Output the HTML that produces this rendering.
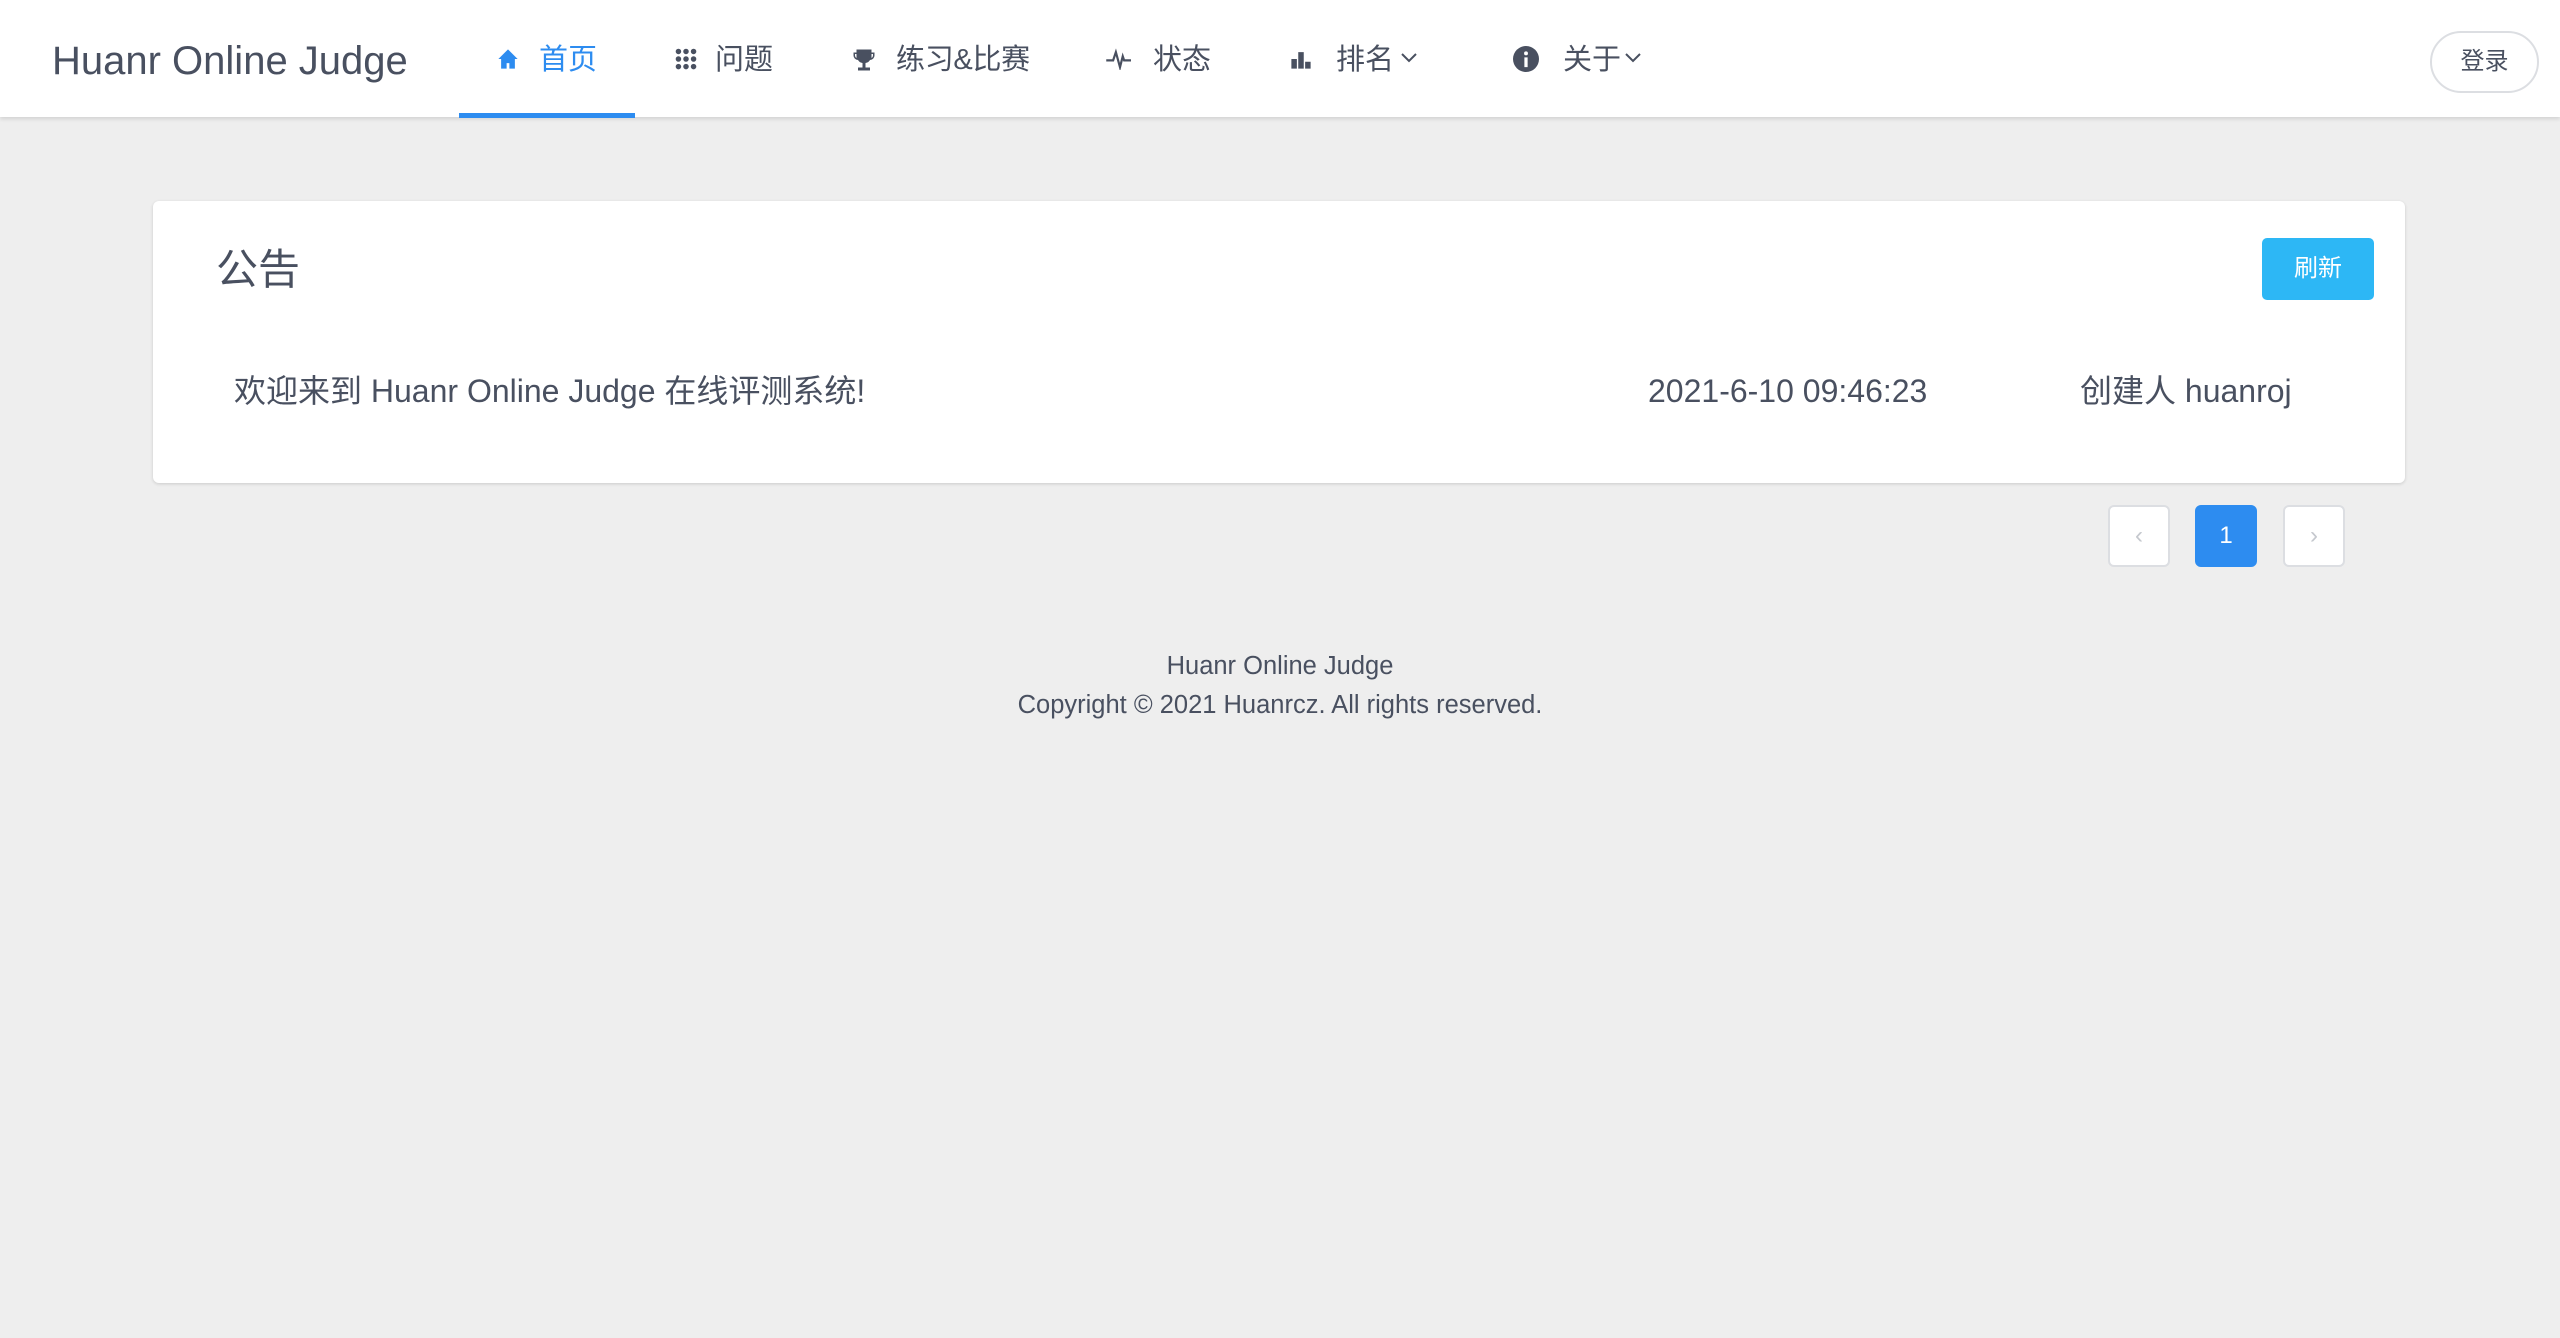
<!DOCTYPE html>
<html><head><meta charset="utf-8"><style>
*{margin:0;padding:0;box-sizing:border-box}
body{width:2560px;height:1338px;background:#eeeeee;font-family:"Liberation Sans","Noto Sans CJK SC",sans-serif;color:#495060;position:relative;overflow:hidden}
.nav{position:absolute;left:0;top:0;width:2560px;height:117px;background:#fff;box-shadow:0 2px 4px rgba(0,0,0,.12)}
.abs{position:absolute;white-space:nowrap}
.logo{left:52px;top:37px;font-size:40px;line-height:48px;color:#495060}
.item{top:41px;font-size:29px;line-height:38px;color:#495060}
.ico{position:absolute;top:48px}
.ul{position:absolute;left:459px;top:113px;width:176px;height:5px;background:#2d8cf0}
.login{position:absolute;left:2430px;top:31px;width:109px;height:62px;border:2px solid #dcdee2;border-radius:31px;font-size:24px;line-height:58px;text-align:center;color:#495060;background:#fff}
.card{position:absolute;left:153px;top:201px;width:2252px;height:282px;background:#fff;border-radius:6px;box-shadow:0 1px 3px rgba(0,0,0,.15)}
.btn{position:absolute;left:2262px;top:238px;width:112px;height:62px;background:#2db7f5;border-radius:5px;color:#fff;font-size:24px;line-height:62px;text-align:center}
.pg{position:absolute;top:505px;width:62px;height:62px;border:2px solid #dcdee2;border-radius:6px;background:#fff;text-align:center;line-height:58px;font-size:24px;color:#c5c8ce}
.foot{position:absolute;left:0;width:2560px;text-align:center;font-size:25.5px;color:#495060}
.row{top:171px;font-size:32px;line-height:38px}
</style></head><body>
<div class="nav">
<div class="abs logo">Huanr Online Judge</div>
<svg class="ico" style="left:497px" width="22" height="22" viewBox="0 0 16 16"><path d="M8 1L1 8h2v7h4v-4h2v4h4V8h2z" fill="#2d8cf0"/></svg>
<div class="abs item" style="left:539px;color:#2d8cf0">首页</div>
<svg class="ico" style="left:675px" width="22" height="22" viewBox="0 0 16 16" fill="#495060"><circle cx="2.5" cy="2.5" r="2"/><circle cx="8" cy="2.5" r="2"/><circle cx="13.5" cy="2.5" r="2"/><circle cx="2.5" cy="8" r="2"/><circle cx="8" cy="8" r="2"/><circle cx="13.5" cy="8" r="2"/><circle cx="2.5" cy="13.5" r="2"/><circle cx="8" cy="13.5" r="2"/><circle cx="13.5" cy="13.5" r="2"/></svg>
<div class="abs item" style="left:715px">问题</div>
<svg class="ico" style="left:852px" width="24" height="24" viewBox="0 0 16 16" fill="#495060"><path d="M3 1h10v2h2v2a3 3 0 0 1-3 3a4 4 0 0 1-3 2v3h3v2H4v-2h3v-3a4 4 0 0 1-3-2a3 3 0 0 1-3-3V3h2zM2 4v1a2 2 0 0 0 1 1.7V4zM13 4v2.7A2 2 0 0 0 14 5V4z"/></svg>
<div class="abs item" style="left:896px;letter-spacing:-0.3px">练习&amp;比赛</div>
<svg class="ico" style="left:1106px" width="28" height="22" viewBox="0 0 20 16"><path d="M0 9h5l2-6 3 11 2-8 1 3h5" fill="none" stroke="#495060" stroke-width="1.6"/></svg>
<div class="abs item" style="left:1153px">状态</div>
<svg class="ico" style="left:1289px" width="24" height="22" viewBox="0 0 16 16" fill="#495060"><rect x="1" y="8" width="4" height="7"/><rect x="6" y="3" width="4" height="12"/><rect x="11" y="10" width="4" height="5"/></svg>
<div class="abs item" style="left:1336px">排名</div>
<svg class="ico" style="left:1400px;top:51px" width="18" height="14" viewBox="0 0 18 14"><path d="M2 3l7 7 7-7" fill="none" stroke="#495060" stroke-width="2"/></svg>
<svg class="ico" style="left:1513px;top:46px" width="26" height="26" viewBox="0 0 16 16"><circle cx="8" cy="8" r="8" fill="#495060"/><circle cx="8" cy="4.5" r="1.2" fill="#fff"/><rect x="7" y="7" width="2" height="6" fill="#fff"/></svg>
<div class="abs item" style="left:1563px">关于</div>
<svg class="ico" style="left:1624px;top:51px" width="18" height="14" viewBox="0 0 18 14"><path d="M2 3l7 7 7-7" fill="none" stroke="#495060" stroke-width="2"/></svg>
<div class="ul"></div>
<div class="login">登录</div>
</div>
<div class="card">
<div class="abs" style="left:63px;top:44px;font-size:42px;line-height:50px;color:#495060">公告</div>
<div class="abs row" style="left:81px">欢迎来到 Huanr Online Judge 在线评测系统!</div>
<div class="abs row" style="left:1495px">2021-6-10 09:46:23</div>
<div class="abs row" style="left:1927px">创建人 huanroj</div>
</div>
<div class="btn">刷新</div>
<div class="pg" style="left:2108px">&#8249;</div>
<div class="pg" style="left:2195px;background:#2d8cf0;border-color:#2d8cf0;color:#fff">1</div>
<div class="pg" style="left:2283px">&#8250;</div>
<div class="foot" style="top:652px">Huanr Online Judge</div>
<div class="foot" style="top:691px">Copyright © 2021 Huanrcz. All rights reserved.</div>
</body></html>
